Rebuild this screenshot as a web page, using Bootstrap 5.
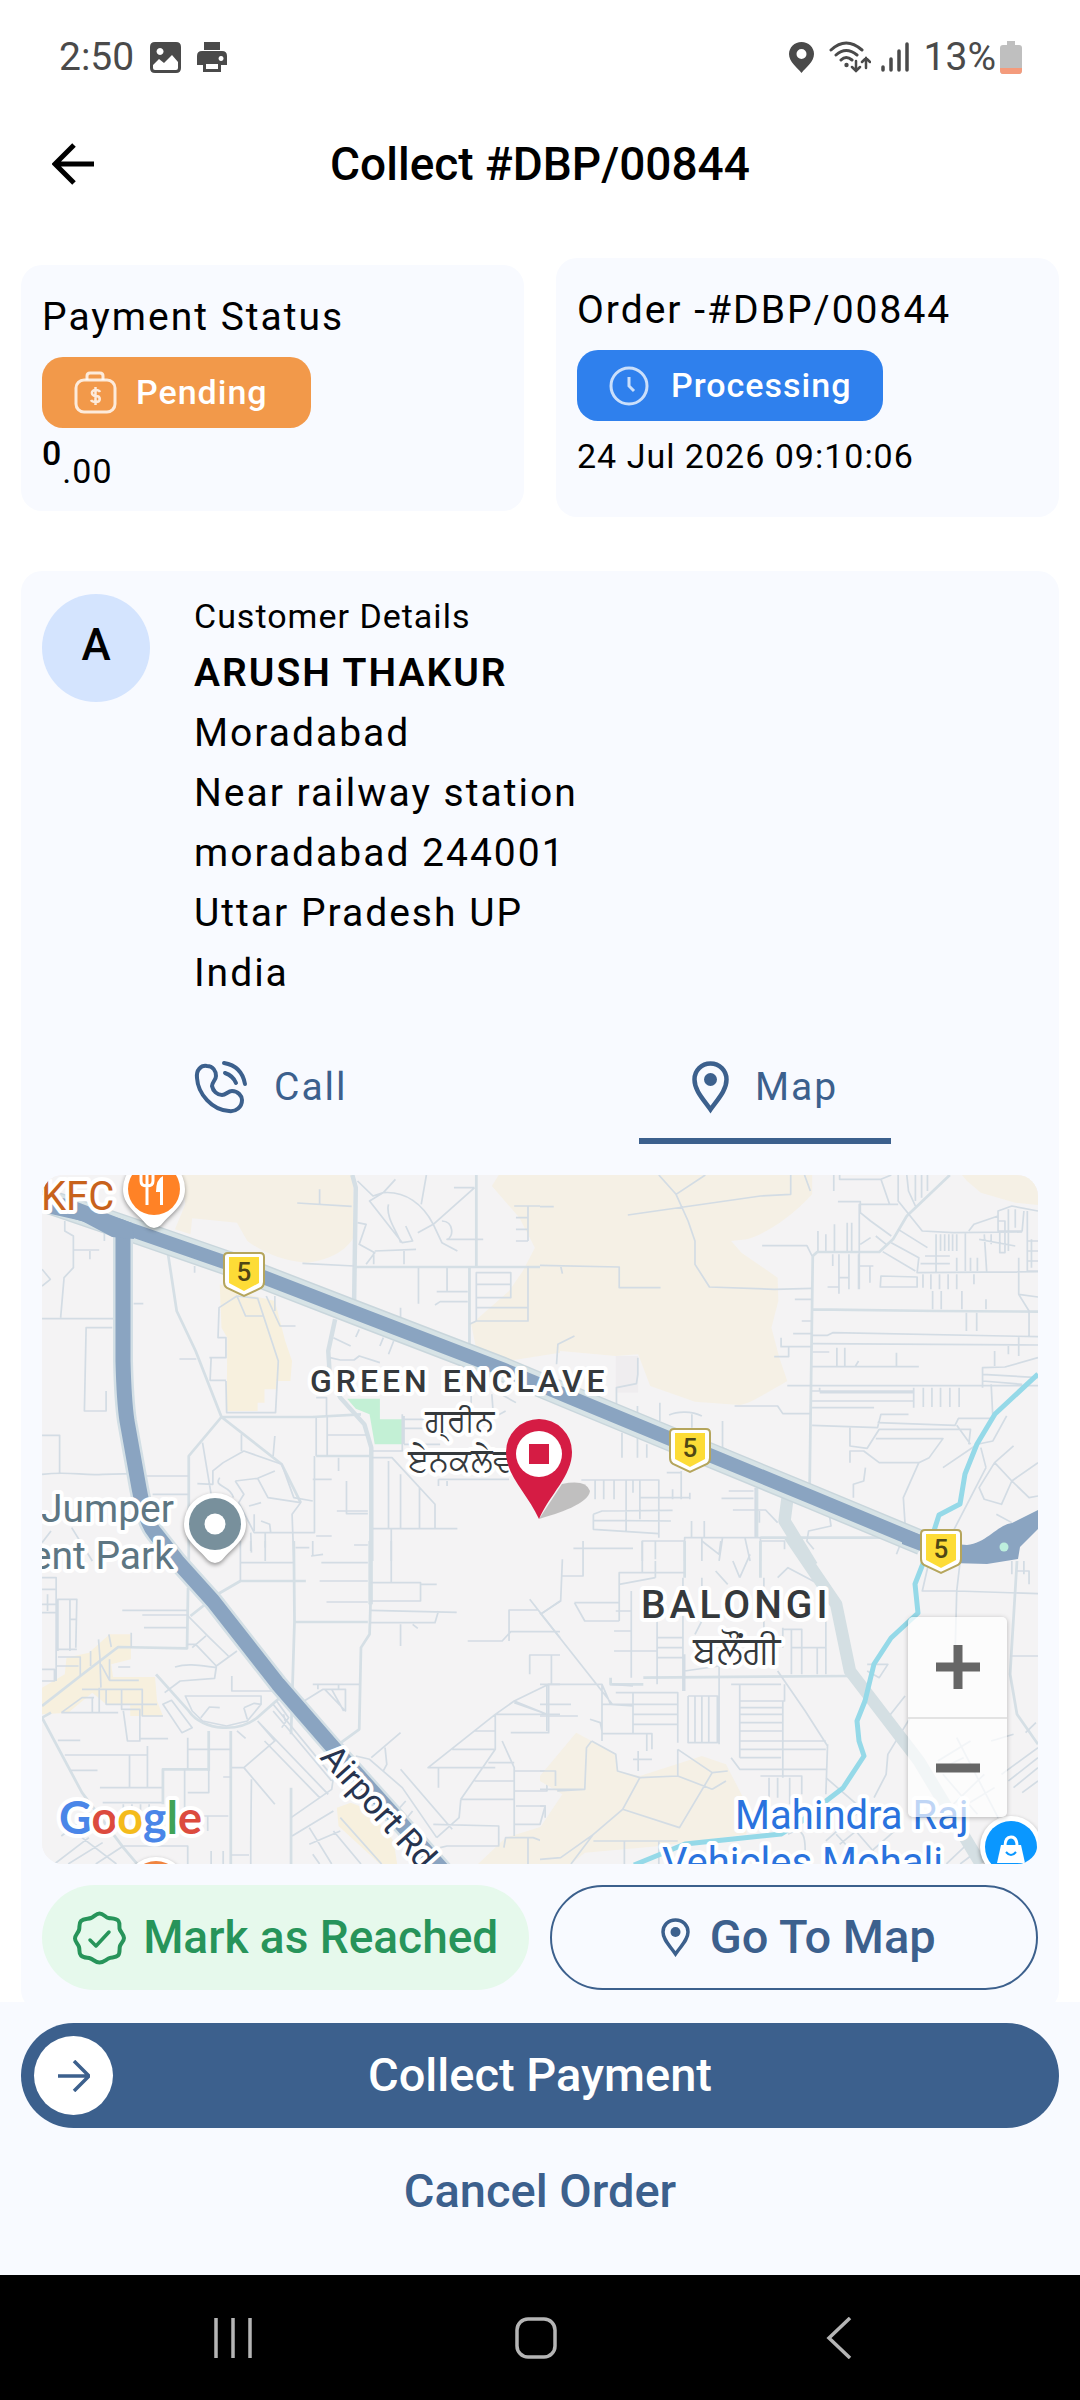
<!DOCTYPE html>
<html lang="en">
<head>
<meta charset="utf-8">
<meta name="viewport" content="width=device-width, initial-scale=1">
<title>Collect #DBP/00844</title>
<link href="https://cdn.jsdelivr.net/npm/bootstrap@5.3.0/dist/css/bootstrap.min.css" rel="stylesheet">
<style>
  :root { --brand: #3c608d; --panel: #f8faff; }
  body { font-family: Roboto, "Noto Sans", sans-serif; color: #000; background: #fff; }
  button { font-family: inherit; }
  svg { display: block; flex: none; }
  .status-strip { height: 114px; padding: 0 58px 0 59px; font-size: 39px; color: #4a4a4a; }
  .gap-a { margin-left: 15px; }
  .gap-b { margin-left: 10px; }
  .title-strip { height: 100px; padding: 0 52px; }
  .title-strip h1 { font-size: 46px; line-height: 60px; font-weight: 500; padding-right: 42px; }
  .main-area { padding: 44px 21px 0; }
  .tile { background: var(--panel); border-radius: 21px; padding: 21px; }
  .tile-order { padding-top: 22px; padding-bottom: 36px; }
  .tile-pay { padding-top: 22px; padding-bottom: 15px; }
  .tiles { gap: 32px; margin-bottom: 54px; }
  .t-lg { font-size: 39px; line-height: 60px; letter-spacing: 2px; }
  .t-md { font-size: 34px; line-height: 50px; letter-spacing: 1px; }
  .pill { height: 71px; border-radius: 21px; font-size: 34px; font-weight: 500; color: #fff; margin-top: 10px; padding: 0 32px; gap: 22px; letter-spacing: 1px; }
  .pill-pending { background: #f2994a; padding-right: 43px; gap: 19px; }
  .pill-processing { background: #2f80ed; }
  .whole { font-weight: 500; }
  .cents { margin-top: 18px; }
  .date-line { margin-top: 10px; }
  .cust { padding-top: 20px; }
  .avatar-dot { width: 108px; height: 108px; background: #d4e4fe; font-size: 44px; font-weight: 500; margin: 3px 44px 0 0; padding-bottom: 7px; }
  .addr { font-size: 39px; line-height: 60px; letter-spacing: 2px; margin: 2px 0 0; }
  .addr strong { font-weight: 600; }
  .tab-line { margin: 54px 0 31px 152px; padding-right: 147px; }
  .tab-btn { border: 0; border-bottom: 6px solid transparent; background: none; padding: 0 0 21px; color: var(--brand); font-size: 39px; line-height: 60px; letter-spacing: 2px; gap: 26px; }
  .tab-btn.is-on { border-color: var(--brand); width: 252px; }
  .map-box { aspect-ratio: 996 / 689; border-radius: 21px; background: #f4f3f4; }
  .zoomer { right: 31px; bottom: 47px; box-shadow: 0 1px 5px rgba(0,0,0,.25); border-radius: 5px; }
  .zoom-btn { width: 99px; height: 100px; border: 0; background: rgba(255,255,255,.7); }
  .zoom-btn + .zoom-btn { border-top: 2px solid #e3e3e3; }
  .act { height: 105px; border-radius: 53px; font-size: 47px; font-weight: 500; padding: 0; }
  .acts { gap: 21px; margin-top: 21px; }
  .act-reach, .act-reach:hover { background: #e6f9ec; color: #27945a; gap: 17px; font-size: 46px; }
  .act-go, .act-go:hover { border: 2px solid var(--brand); color: var(--brand); gap: 20px; background: var(--panel); padding-left: 8px; }
  .foot { background: var(--panel); margin-top: -9px; padding: 21px 21px 31px; }
  .act-collect, .act-collect:hover { background: var(--brand); color: #fff; padding: 0 12px; }
  .collect-label { margin-right: 79px; }
  .knob { width: 79px; height: 79px; background: #fff; }
  .act-cancel { color: var(--brand); margin-top: 11px; }
  .sys-nav { background: #000; height: 126px; padding: 0 220px 0 212px; }
  .sys-nav button { background: none; border: 0; padding: 0; width: 42px; }
  .halo { paint-order: stroke; stroke: #fff; stroke-width: 8px; stroke-linejoin: round; }
  .st { fill: none; stroke: #d3dce4; stroke-width: 5; stroke-linejoin: round; }
  .st-w { fill: none; stroke: #d5dfe5; stroke-width: 13; stroke-linejoin: round; }
  .st-m { fill: none; stroke: #d5dfe5; stroke-width: 8; stroke-linejoin: round; }
  .st-x { fill: none; stroke: #d4dfe3; stroke-width: 36; stroke-linejoin: round; }
</style>
</head>
<body>
<header>
  <div class="status-strip d-flex align-items-center justify-content-between">
    <div class="d-flex align-items-center">
      <span>2:50</span>
      <svg class="ms-3" width="31" height="31" viewBox="0 0 31 31"><path fill="#4a4a4a" fill-rule="evenodd" d="M5 0h21q5 0 5 5v21q0 5-5 5H5q-5 0-5-5V5q0-5 5-5zM10 6a3.5 3.500 0 1 0 .1 0zM3 23v3q0 2 2 2h21q2 0 2-2v-6l-6-7-8 8-5-4z"/></svg>
      <svg class="ms-3" width="30" height="30" viewBox="0 0 30 30"><path fill="#4a4a4a" fill-rule="evenodd" d="M7 0h16v8H7zM5 9h20q5 0 5 5v9h-6v7H6v-7H0v-9q0-5 5-5zM24 14a2.500 2.500 0 1 0 .1 0zM9 22v5h12v-5z"/></svg>
    </div>
    <div class="d-flex align-items-center">
      <svg width="25" height="31" viewBox="0 0 25 31"><path fill="#4a4a4a" fill-rule="evenodd" d="M12.500 0C5.500 0 0 5.500 0 12c0 8 8 13 12.500 19C17 25 25 20 25 12 25 5.500 19.500 0 12.500 0zm0 7a5 5 0 1 1 0 10 5 5 0 0 1 0-10z"/></svg>
      <svg class="gap-a" width="42" height="32" viewBox="0 0 42 32"><g fill="none" stroke="#4a4a4a" stroke-width="3" stroke-linecap="round"><path d="M2 9q15-14 31 0M7 14q10-9 21 0M12 19q5-5 11 0"/><path stroke-width="2.500" d="M27 20v10m-4-4 4 4 4-4M37 27V17m-4 4 4-4 4 4"/></g><circle cx="17.500" cy="24" r="2.200" fill="#4a4a4a"/></svg>
      <svg class="gap-b" width="28" height="30" viewBox="0 0 28 30"><g stroke="#4a4a4a" stroke-width="3.500" stroke-linecap="round"><path d="M2 25v3M10 17v11M18 9v19M26 2v26"/></g></svg>
      <span class="gap-a">13%</span>
      <svg class="ms-1" width="22" height="33" viewBox="0 0 22 33"><path fill="#bfbfbf" d="M7 0h8v4h4q3 0 3 3v22q0 4-3 4H3q-3 0-3-4V7q0-3 3-3h4z"/><path fill="#f49b7c" d="M0 27h22v2q0 4-3 4H3q-3 0-3-4z"/></svg>
    </div>
  </div>
  <div class="title-strip d-flex align-items-center">
    <button class="btn p-0 border-0" aria-label="Back"><svg width="42" height="42" viewBox="0 0 42 42"><path d="M42 21H4M22 2 3 21l19 19" fill="none" stroke="#000" stroke-width="5"/></svg></button>
    <h1 class="mb-0 flex-grow-1 text-center">Collect #DBP/00844</h1>
  </div>
</header>

<main class="main-area">
  <div class="tiles d-flex align-items-center">
    <section class="tile tile-pay flex-fill w-50">
      <div class="t-lg">Payment Status</div>
      <div class="pill pill-pending d-inline-flex align-items-center">
        <svg width="43" height="43" viewBox="0 0 43 43" fill="none" stroke="#fff" stroke-opacity=".8" stroke-width="3"><rect x="2" y="9" width="39" height="32" rx="8"/><path d="M13 9V5q0-3 3-3h10q3 0 3 3v4"/><path stroke-width="2.500" d="M26 21q-1-2-4-2c-6 0-5 6 0 6s5 6 0 6q-4 0-5-2M21.500 16v18"/></svg>
        <span>Pending</span>
      </div>
      <div class="d-flex t-md"><span class="whole">0</span><span class="cents">.00</span></div>
    </section>
    <section class="tile tile-order flex-fill w-50">
      <div class="t-lg">Order -#DBP/00844</div>
      <div class="pill pill-processing d-inline-flex align-items-center">
        <svg width="40" height="40" viewBox="0 0 40 40" fill="none" stroke="#fff" stroke-opacity=".75" stroke-width="3"><circle cx="20" cy="20" r="18"/><path d="M20 11v9l5 5"/></svg>
        <span>Processing</span>
      </div>
      <div class="t-md date-line">24 Jul 2026 09:10:06</div>
    </section>
  </div>

  <section class="tile cust">
    <div class="d-flex">
      <div class="avatar-dot rounded-circle d-flex align-items-center justify-content-center">A</div>
      <div>
        <div class="t-md">Customer Details</div>
        <address class="addr"><strong>ARUSH THAKUR</strong><br>Moradabad<br>Near railway station<br>moradabad 244001<br>Uttar Pradesh UP<br>India</address>
      </div>
    </div>

    <div class="tab-line d-flex justify-content-between">
      <button class="tab-btn d-flex align-items-center">
        <svg width="54" height="54" viewBox="0 0 54 54" fill="none" stroke="#3c608d" stroke-width="4" stroke-linecap="round" stroke-linejoin="round"><path d="M3 18C2 10 7 5 13 6c6 0 9 5 9 10 0 4-4 6-4 10 1 5 5 9 10 9 4 0 6-4 10-4 6 0 10 5 10 9 0 7-6 12-13 11C18 50 4 34 3 18z"/><path d="M30 3c12 2 19 10 21 21M31 13c6 2 9 5 11 10"/></svg>
        <span>Call</span>
      </button>
      <button class="tab-btn is-on d-flex align-items-center justify-content-center">
        <svg width="37" height="53" viewBox="0 0 37 53"><path d="M18.500 2.500c-9 0-16 7-16 16 0 11 9 20 16 30 7-10 16-19 16-30 0-9-7-16-16-16z" fill="none" stroke="#3c608d" stroke-width="4.500"/><circle cx="18.500" cy="18.500" r="6.500" fill="#3c608d"/></svg>
        <span>Map</span>
      </button>
    </div>

    <div class="map-box position-relative overflow-hidden">
      <svg width="100%" height="100%" viewBox="0 0 996 689" preserveAspectRatio="xMidYMid slice" font-family="Roboto, 'Noto Sans', sans-serif">
        <rect width="996" height="689" fill="#f4f3f4"/>
        <!-- north-west quarter -->
        <g transform="translate(-22 -14) scale(.3444 .3333)">
          <path fill="#f5f0e5" d="M470 42H968V230C940 280 880 300 830 305 760 300 700 270 660 240L630 185 500 172 495 220 450 205 480 130zM1390 42H1568V575L1430 598 1330 590 1310 490 1420 390 1460 330 1495 260 1450 170 1370 75z"/>
          <path fill="#f7f0de" d="M580 370 660 400 740 420 770 540 790 600 785 660H745V685H710V725H690V750H600L602 530 585 500z"/>
          <path fill="#c3f0d5" d="M950 713H1045V775H1110V850H1030L1015 760 975 743z"/>
          <path class="st-w" d="M965 42 975 80 970 430"/>
          <path class="st-w" d="M915 475 895 570 900 650 930 710 1000 790 1020 860V1200"/>
          <path class="st-m" d="M430 280 455 450 510 570 585 768 490 885V1200M585 768H850L990 760M860 885H1020M585 768 760 910 815 1025M1325 42V318M975 318H1568M1305 320V550"/>
          <path class="st" d="M64 473H272M130 180V210L155 225V320L128 350 118 470M155 267H230M203 270V295M245 210V240M268 500H192L187 750H250V690M64 325 88 355 64 375M330 428H358M463 594H512M550 590H598V530H575L578 440 630 405 690 412 750 600 742 755H600L598 660M555 590 552 658H598M630 405 655 465H705M715 405 755 495H800M507 315V335M740 405V450M805 126 963 136M870 85V130M820 307 970 315M1090 55 1055 95 1025 105 980 60M1055 95C1120 90 1170 130 1200 190L1320 80M1055 95 1015 120 1110 245 1140 240 1120 195M1200 190 1155 215M1200 190 1225 245 1270 270M1225 180C1260 180 1260 230 1240 235H1345M1070 130C1060 170 1100 220 1105 245M980 185 1005 190 985 250 1030 275 1005 310M1030 270 1150 265M1027 275V310M1115 270V310M1260 80H1320M1180 42 1165 130M1435 135H1550M1475 135V240M1440 170H1475M1440 205H1475M1440 240H1475M1325 335H1425V410H1325zM1325 370H1425M1325 440H1475V315M1325 480H1475V440M1305 490 1325 480V340M1157 320V428M1210 392H1300M1240 320V390M1205 432 1220 422H1300M1105 440V475M910 530 960 555M985 505 975 528M1055 530 1045 555M1085 540 1070 580M900 590 930 597H970L985 585 1045 605M1310 700V740M1370 700 1375 770 1410 750M1380 690 1440 725M860 710H890V765M860 770V885M892 765V885M892 822H1005M1110 760V870H1025M1115 765V850M1115 775H1190M1115 802H1180M1115 850H1220M1110 840 1110 870M64 940C150 930 180 945 240 940L330 938M350 945H490M64 823H115V940M385 1000H490M530 845 555 1000M643 820V870M740 825 735 885M590 905 650 870 760 910 795 1010 850 1020M590 905 560 930V970L515 968M625 960 690 952 740 930M625 960 650 1000 635 1025 680 1115H855V885M690 952 720 1010 815 1025 790 1060 795 1200M850 955H905M665 1035 700 1025M680 1060V1110M700 1080 725 1090 728 1115M580 950C560 980 610 970 620 1010M925 890V930M948 960V1058H1010M860 1125H905M920 1050H1010M1022 890H1080L1205 1030V1100M1070 900V1100M1105 940V1100M1160 980V1100M1025 1103H1270M1078 1105V1200M1215 955H1420M1215 955V975M1240 960V975M670 1115 672 1175M712 1115V1200M150 1100 210 1200M90 1110 64 1145"/>
        </g>
        <!-- north-east quarter -->
        <g transform="translate(498 -14) scale(.3444 .3333)">
          <path fill="#f5f0e5" d="M0 42H790V100C720 180 640 225 600 235L555 240 585 275 690 350 692 420 672 500 695 590 718 660C650 700 610 728 580 732L450 722 320 675 285 580 220 585 60 570 0 578zM1240 60 1280 95 1380 125 1446 132V60Q1430 42 1395 42H1225z"/>
          <path fill="#efedef" d="M220 585H285V695H220z"/>
          <path class="st-m" d="M783 970 792 285 805 273H985L1025 235 1065 165 1190 42M792 445 1150 450 1446 452M1130 1130H640M630 980V1130"/>
          <path class="st-x" d="M720 1000 710 1080 790 1215"/>
          <path class="st" d="M790 523H835L850 515 1446 527M927 385V130H1040M792 548 1446 552M345 42 395 100 480 42M395 100 430 180 450 240V310L492 378 680 385 790 382M255 162 640 105 728 100V42M0 137H40M0 313 230 318V380H350M48 610 52 550 100 525M60 315 65 338M768 42 785 90M645 254H775L790 285M740 415H790M760 480H788M735 518H790M700 530V557H788M722 557V587H680M718 674H1446M565 735H690L705 758H785M853 42V90M870 42V55H990L1015 130M990 55 1020 42M1040 42V120L1110 210 1200 215 1400 213M1065 42 1070 90 1090 135M1090 42V120M1108 42V110M1125 42V90M865 122H930V155L960 180 1020 225M807 210V270M830 220V270M855 190V270M892 185V270M905 185V270M930 250 960 230M975 225 1005 250M1040 205 1125 260M1020 245 1100 290 1095 335 1446 332M995 272 1090 330M990 345 1095 348V378H988zM850 280V315M868 280V398M897 280V385M925 280V385M868 350H897M835 378H868M925 315H968M958 315V365M1150 220V335M1163 220V270M1175 220V270M1187 220V270M1198 220V270M1210 220V270M1235 215V330M1118 285H1190M1105 308H1190M1210 290V330M1250 290V330M1270 290V330M1290 220 1297 332M1112 340V380M1135 340V385M1160 340V385M1185 340V385M1210 340V385M1260 340V370M1245 210 1260 190 1330 165V150L1370 135 1446 150M1330 150V210H1400L1405 150M1330 180H1350V275H1335V210M1360 145V270M1380 145V200M1415 150V330H1446M1415 240H1446M1415 270H1446M1415 300H1446M1427 235V320M1275 235 1380 255M1310 220V250M1390 290V400L1446 408M1390 400 1420 450V527M1140 390V445M1165 390V445M1225 390V445M1295 415V445M1238 455V510M1268 455V510M1390 525V585M1320 570V615M1360 555V580M792 573H840M862 560V615M885 560V615M1035 575V617M790 617H1100M925 600 915 617M790 690H1085M812 680V690M812 695H1085M790 720H1085M790 740H970M1085 680V740M1113 680V738M1138 680V738M1163 680V738M1190 680V738M1217 680V738M790 793 980 800 990 760H1070M980 785 1205 793 1215 772H1315L1310 670M1285 680V620L1350 618 1446 590M1285 640 1446 650M1285 660 1400 670M1355 765 1315 840 1270 850 1170 920M1210 793 1250 850M900 800V855L950 862 985 805H1250L1245 850M975 833H1170L1130 890 1100 905H985L940 870H900V905M1100 905 1055 1010 1060 1090 1080 1105M945 920 940 960 910 970V1010M1375 855 1320 905 1275 980 1290 1015 1340 1030 1370 960 1320 905M1370 960 1446 905M1370 960 1420 1010 1446 1005M1295 920 1195 1120M1280 860 1295 920M1325 1060 1370 1085M284 590V640L280 668 222 680V740M283 735V890M348 725V780M375 762C400 750 440 750 470 765M441 760V800M530 780V860L580 885M238 815V890M310 850V890M120 957H345V1130M345 960V1115M160 957V1015M185 957V1015M215 957V1015M250 957V1110M270 957V995M290 957V1010H435M290 1010V1075M155 1060 180 1050 385 1048M155 1060V1105L345 1118M155 1078 380 1080M410 930V1015M368 935H410M385 985V1015M435 995V1015M548 990H620M527 1012H620M560 1047H655L690 1085M637 1050V1085M625 980V1130M440 1080V1130M477 1080V1130M420 1200V1130H640V1200M97 1162H270M297 1200V1140H420M335 1140V1195M530 1130 520 1200M470 1130V1200M640 1140H710V1165M595 1130 610 1200M840 1060 845 1095 780 1110 775 1140 795 1165M1050 1140 1035 1180"/>
        </g>
        <!-- south-west quarter -->
        <g transform="translate(-22 366) scale(.3444 .3333)">
          <path fill="#f7f0de" d="M64 440 130 400 135 350 200 335 260 280H322V355L265 370 270 408H392L398 480 415 525H320V490H250L210 455 140 515 64 520zM920 800 960 785 1010 805 1085 900 1095 969H1045L925 855z"/>
          <path fill="#f5f0e5" d="M1330 969 1410 890 1520 855 1568 790V969z"/>
          <path fill="#f7f0de" d="M1568 640 1520 705 1568 740z"/>
          <path class="st-w" d="M1018 0V190"/>
          <path class="st-m" d="M795 0 797 240 787 580M1018 180 1015 280 990 320 985 565 925 610M64 495 175 405 285 318 485 322 488 140M565 165 640 120 830 120M495 225 550 180M64 530 180 755 300 920 340 969M64 530 90 515M395 400 490 510C530 570 640 580 700 520L760 465M548 570V690M612 570V969M415 790V685H548M787 740V969M800 243H1010"/>
          <path class="st" d="M640 0V120M640 65H795M875 65H1010M870 120H1010M970 12H1010M890 183H1010M1078 0V122M1018 125H1163V180H1018M1165 130H1210M1018 208 1268 214M1215 210 1205 245H1015M1105 250V315M1140 250 1155 262M670 0V30M712 0V20M845 45 880 40M850 0V45M800 20H840M297 208H485M355 222H485L550 290 605 345M360 260H485M485 310H510L570 375 630 330M540 285 500 320M450 378C490 365 530 375 570 380L565 412 465 420 420 455M570 375 565 412M615 405V450H750M480 465H700V490L660 540 600 555 530 540 500 510zM525 530 550 498 580 500M650 500 680 487 700 490M650 500 660 535M415 490 440 478 500 560 470 575zM487 590V685M487 625H612M590 708H612M64 110H105V420M64 145H105M64 190H105M64 215H105M80 160V210M110 330V175H165L162 320M145 175V330M145 235H165M110 325H165M110 348H175V405M105 375H170M64 385H100V420H64M228 295 232 350 235 440M258 280 265 318M323 275V320M205 330V375M235 370 260 418H345M260 355V418M285 378H320M180 445H355V525H415M250 445V490H398M295 445V505H348V600H312L300 510M120 515 180 470H215M120 515H285M210 468V515M230 440V515M110 598H175M350 593H430M130 642H370M370 615V740M318 642V740M148 688H225M232 740H412M240 785H412M300 790V840M325 790V830M350 790V830M375 790V830M478 685V870M487 755H548V690M487 825H605M545 870V825M615 680H650L740 600 690 540M650 680 740 790M672 715 670 900V969M612 942H665M690 540 895 760M710 600 870 770M735 510 905 720M735 490 910 710 905 745 787 830M745 480 780 530 760 560M765 520 770 540M630 570 655 592M555 930V969M590 930V969M300 915H487V969M100 969 200 890M140 969 240 905M180 890 280 969M220 969 300 915M120 885 180 840M790 885 910 810M840 910 930 870M840 860 905 969M850 940 870 969M910 870 990 969M930 830 1050 969M850 430H985M825 480 880 445H945V510L885 445M905 445 940 510M865 430V445M925 430V445M975 645 1015 655 1110 740 1210 890M1020 650 1105 575M1060 620 1065 670 1055 690M1105 685 1255 865M1120 780 1060 850M1140 810 1100 860M1220 920 1240 915H1390V855L1200 850M1280 775 1275 830 1210 890M1280 775 1380 625V520L1185 680H1380M1255 625H1380M1320 570H1380M1380 520 1435 480 1535 430H1568M1435 480 1530 520H1380M1535 430V575H1425M1435 485 1530 520M1530 520H1568M1400 600 1435 680V885M1360 665H1435M1320 720H1435M1280 775H1435M1435 690H1568M1530 690V750H1435M1440 795H1525L1510 850H1435M1405 920 1410 890H1490L1540 910H1568M1475 890V969M1215 680V740M1300 300H1400L1425 272H1568M1420 300V207H1505M1480 175 1568 290M1515 218 1568 180M1480 400V342H1568M1543 342V430"/>
        </g>
        <!-- south-east quarter -->
        <g transform="translate(498 366) scale(.3444 .3333)">
          <path fill="#f5f0e5" d="M0 705 105 575 150 600 220 640 225 690 290 705 470 645 540 670 590 770 600 880 350 915 130 935 90 969H0V860L65 760 0 720z"/>
          <path class="st-m" d="M420 0V110M640 0V110M1385 60 1365 400 1385 520 1446 610M300 410 900 405M205 410V430H300"/>
          <path class="st" d="M0 430H180L205 490M0 215 210 490M65 55 60 180 0 220M65 105H125V0M125 105V30M230 240V95H420M230 130 335 110M297 0V95M335 60V110M265 150V410M100 185H230M100 185 130 240H230M220 210H265M340 240V430M415 110V450M215 270H265M215 330H340M340 290H415M340 320H415M340 350H415M470 0 520 40 525 0M510 90 545 130M470 110V240L450 280M580 110 610 40M580 110 560 60M650 110V260M690 110 720 80 830 140M830 240V400M705 260V320M730 265V400M760 265V400M805 320V400M730 320H830M705 265H760V300M690 390 770 510 835 615M420 390 520 375M420 340V450M520 370V610M0 490H90M0 525H110M20 430V570M180 430V600M205 490 270 495M220 455H400V605M270 455V580M180 490H400M270 520H400M270 550H400M180 578H325V625M210 430 270 435M430 465V605H515V465H430M450 465V605M470 465V605M490 465V605M555 430H700M580 430V600M580 480H710V430M580 500H705M580 520H705M580 545H705M580 570H705M705 480V710M580 600H830M580 625H830M580 650H700M555 650 580 685H830M835 610 830 760M830 710 920 790M640 705H760V760M665 710V770M690 710V770M725 710V790M580 600V650M150 600 135 620 130 745H0M150 600 220 640 225 690 290 710 240 805M290 710 400 705 500 745M240 805 405 860 500 695 400 625M500 695 545 690M400 625V705M130 745 50 750M240 805 155 880 90 969M155 880 60 950 0 955M155 900H400M245 900V969M345 900V969M0 690H45V735M0 795H15V830M285 630V690M310 580V630M270 655H325M500 745 540 720M145 535 175 545 180 570M950 370H1010L985 410 950 390M1060 465 1010 530M1075 530 1010 640 1005 700 970 770M1130 60 1110 150H1210L1205 350M1220 60 1210 150 1446 158M1385 90H1420V130M1365 345H1446M1370 60V100M1405 60V100M1310 600 1375 580M1155 660 1250 600M1210 590 1330 830M1150 690 1230 650M1170 700 1270 820M1200 790 1290 700M1240 790 1320 740M1340 700 1446 620M1360 720 1446 650M1375 740 1446 680M1400 755 1446 720M1410 575 1440 545M720 880C770 850 770 900 770 930M950 790 830 900M990 810 870 910M1030 870 920 969M900 850 1000 969M860 880 940 969M1180 969 1250 900M1220 969 1270 930"/>
          <path class="st-x" d="M725-15 860 190 900 390 1100 660 1280 969"/>
        </g>
        <!-- canal -->
        <path fill="none" stroke="#95d9e8" stroke-width="5" stroke-linejoin="round" d="M996 199 953 239 935 269 923 299 918 329 897 340 890 362 882 386 873 409 876 438 849 463 832 489 823 526 815 546 817 566 822 581 801 613 784 626 760 646 739 659 691 664 643 669 619 679 592 690"/>
        <!-- highways -->
        <g fill="none" stroke-linejoin="round">
          <path stroke="#c9d6dc" stroke-width="25" d="M-10 21 81 52 185 88 309 136 460 194 532 224 648 272 767 321 880 368"/>
          <path stroke="#d7e3e6" stroke-width="22" d="M-10 21 81 52 185 88 309 136 460 194 532 224 648 272 767 321 880 368"/>
          <path stroke="#d3dfe5" stroke-width="20" d="M81 56V186Q82 226 85 246L97 313Q103 346 113 358L135 386 171 426 236 509 288 569 405 700"/>
          <path stroke="#8aa4c1" stroke-width="15" d="M81 50V186Q82 226 85 246L97 313Q103 346 113 358L135 386 171 426 236 509 288 569 405 700"/>
          <path stroke="#8aa4c1" stroke-width="14" d="M-10 23 81 52 185 88 309 136 460 194 532 224 648 272 767 321 880 368"/>
        </g>
        <path fill="#8aa4c1" d="M-5 18 30 25 90 48 92 64 70 62 40 46-5 36zM860 353 900 368 925 370C945 368 955 350 970 348L998 334V352L978 372 976 384 945 389 910 388 860 369z"/>
        <circle cx="962" cy="372" r="4.500" fill="#bdeedd"/>

        <g font-size="32" font-weight="500" fill="#35393c" class="halo">
          <text x="268" y="217" letter-spacing="4">GREEN ENCLAVE</text>
          <text x="599" y="443" font-size="39" letter-spacing="4">BALONGI</text>
          <g font-weight="400" text-anchor="middle"><text x="417" y="256" font-size="31">ਗ੍ਰੀਨ</text><text x="418" y="296" font-size="32">ਏਨਕਲੇਵ</text><text x="694" y="488" font-size="38">ਬਲੌਂਗੀ</text></g>
        </g>
        <g class="halo" font-size="39">
          <text x="-1" y="35" font-size="40" fill="#c8621b">KFC</text>
          <g fill="#5d7683" text-anchor="end"><text x="132" y="347">Jumper</text><text x="132" y="394">ent Park</text></g>
          <g fill="#2a73de" font-size="40"><text x="693" y="654">Mahindra Raj</text><text x="620" y="701">Vehicles Mohali</text></g>
          <text transform="translate(277 583) rotate(48)" font-size="34" fill="#27344f">Airport Rd</text>
          <text x="17" y="659" font-size="45" font-family="Lato, sans-serif" font-weight="700"><tspan fill="#4a86e8">G</tspan><tspan fill="#dc4b3e">o</tspan><tspan fill="#f4bb1c">o</tspan><tspan fill="#4a86e8">g</tspan><tspan fill="#40a357">l</tspan><tspan fill="#dc4b3e">e</tspan></text>
        </g>

        <g text-anchor="middle" font-size="26" font-weight="500" fill="#4f4715">
          <g transform="translate(202 99)"><path d="M-16-21h32q4 0 4 4V8q0 4-3 6L0 22-17 14q-3-2-3-6v-25q0-4 4-4z" fill="#fff" stroke="#b5a55c" stroke-width="2"/><path d="M-15-17h30V9L0 17-15 9z" fill="#fddc36"/><text y="7">5</text></g>
          <g transform="translate(648 275)"><path d="M-16-21h32q4 0 4 4V8q0 4-3 6L0 22-17 14q-3-2-3-6v-25q0-4 4-4z" fill="#fff" stroke="#b5a55c" stroke-width="2"/><path d="M-15-17h30V9L0 17-15 9z" fill="#fddc36"/><text y="7">5</text></g>
          <g transform="translate(899 376)"><path d="M-16-21h32q4 0 4 4V8q0 4-3 6L0 22-17 14q-3-2-3-6v-25q0-4 4-4z" fill="#fff" stroke="#b5a55c" stroke-width="2"/><path d="M-15-17h30V9L0 17-15 9z" fill="#fddc36"/><text y="7">5</text></g>
        </g>

        <g filter="drop-shadow(0 2px 2px rgba(0,0,0,.4))" fill="#fff">
          <path d="M112-17a31 31 0 0 1 31 31c0 16-12 22-24 36q-7 6-14 0C93 36 81 30 81 14a31 31 0 0 1 31-31z"/>
          <path d="M173 318a31 31 0 0 1 31 31c0 16-12 22-24 36q-7 6-14 0c-12-14-24-20-24-36a31 31 0 0 1 31-31z"/>
          <circle cx="969" cy="672" r="31"/><circle cx="114" cy="713" r="31"/>
        </g>
        <circle cx="112" cy="14" r="26" fill="#ff8226"/>
        <path fill="none" stroke="#fff" stroke-width="3" d="M99-3v9q0 5 6 5t6-5v-9M105-3v33"/><path fill="#fff" d="M121 1q-7 3-7 16h4v13h3z"/>
        <circle cx="173" cy="349" r="26" fill="#78909c"/><circle cx="173" cy="349" r="10.500" fill="#fff"/>
        <circle cx="969" cy="672" r="26" fill="#0a97ff"/>
        <path fill="#fff" d="M959 670h20l4 18h-28z"/><path fill="none" stroke="#fff" stroke-width="3" d="M963 671q0-9 6-9t6 9"/><path fill="none" stroke="#0a97ff" stroke-width="2" d="M964 677q5 6 10 0"/>
        <circle cx="114" cy="712" r="26" fill="#f08440"/>

        <path fill="#a5a3a3" fill-opacity=".65" d="M497 344 520 309q24-5 28 7c-2 13-31 22-51 28z"/>
        <path fill="#d51c44" d="M497 244a33 33 0 0 1 33 33c0 24-22 42-33 67-11-25-33-43-33-67a33 33 0 0 1 33-33z"/>
        <circle cx="497" cy="279" r="23" fill="#fff"/><path fill="#d51c44" d="M487 269h20v20h-20z"/>
      </svg>
      <div class="zoomer position-absolute d-flex flex-column overflow-hidden">
        <button class="zoom-btn d-flex align-items-center justify-content-center p-0" aria-label="Zoom in"><svg width="44" height="44" viewBox="0 0 44 44"><path fill="#666" d="M17.500 0h9v17.500H44v9H26.500V44h-9V26.500H0v-9h17.500z"/></svg></button>
        <button class="zoom-btn d-flex align-items-center justify-content-center p-0" aria-label="Zoom out"><svg width="44" height="44" viewBox="0 0 44 44"><path fill="#666" d="M0 17.500h44v9H0z"/></svg></button>
      </div>
    </div>

    <div class="acts d-flex">
      <button class="btn act act-reach w-50 d-flex align-items-center justify-content-center">
        <svg width="53" height="54" viewBox="0 0 53 54" fill="none" stroke="#27945a" stroke-width="4" stroke-linecap="round" stroke-linejoin="round"><path d="M26.500 2.500c4 0 6 4 9 4.500s8 0 10 3 0 6 1.500 9 4 5 4 8-3 5-4 8 .5 7-2 9.500-6.500 1.500-9.500 3-5 4-9 4-6-3-9-4-7-.5-9.500-3S7 39 6 36s-4-5-4-8.500 3-5.500 4-8.500-.5-6.500 2-9 7-2 10-3 5-4.500 8.500-4.500z"/><path d="M17 29l6 6 13-14" stroke-width="3.500"/></svg>
        <span>Mark as Reached</span>
      </button>
      <button class="btn act act-go w-50 d-flex align-items-center justify-content-center">
        <svg width="29" height="39" viewBox="0 0 29 39"><path d="M14.500 2C7 2 2 7.500 2 14c0 8 7 14 12.500 22C20 28 27 22 27 14c0-6.500-5-12-12.500-12z" fill="none" stroke="#3c608d" stroke-width="3.500"/><circle cx="14.500" cy="14" r="5" fill="#3c608d"/></svg>
        <span>Go To Map</span>
      </button>
    </div>
  </section>
</main>

<footer class="position-relative">
  <div class="foot">
    <button class="btn act act-collect w-100 d-flex align-items-center">
      <span class="knob rounded-circle d-flex align-items-center justify-content-center"><svg width="32" height="32" viewBox="0 0 32 32"><path d="M0 16h30M16 1l15 15-15 15" fill="none" stroke="#3c608d" stroke-width="3.500"/></svg></span>
      <span class="collect-label flex-grow-1 text-center">Collect Payment</span>
    </button>
    <button class="btn act act-cancel border-0 w-100">Cancel Order</button>
  </div>
  <nav class="sys-nav d-flex align-items-center justify-content-between" aria-label="System">
    <button aria-label="Recent apps"><svg width="42" height="42" viewBox="0 0 42 42"><path stroke="#b5b5b5" stroke-width="3.500" d="M4 1v40M21 1v40M38 1v40"/></svg></button>
    <button aria-label="Home"><svg width="42" height="42" viewBox="0 0 42 42"><rect x="2" y="2" width="38" height="38" rx="11" fill="none" stroke="#b5b5b5" stroke-width="3.500"/></svg></button>
    <button aria-label="Back"><svg width="42" height="42" viewBox="0 0 42 42"><path fill="none" stroke="#b5b5b5" stroke-width="3.500" d="M32 1 11 21l21 20"/></svg></button>
  </nav>
</footer>
<script src="https://cdn.jsdelivr.net/npm/bootstrap@5.3.0/dist/js/bootstrap.bundle.min.js"></script>
</body>
</html>
